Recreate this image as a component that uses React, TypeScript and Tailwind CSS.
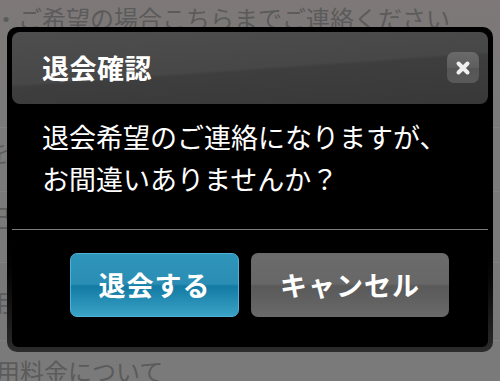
const jp = { fontFamily: '"Noto Sans CJK JP", "Noto Sans", sans-serif' };

function PageBehind() {
  // 後ろのページ（オーバーレイで暗くなっている）
  return (
    <div className="flex flex-col w-[500px] h-[381px] bg-[#7a7a7a] text-[#5b5b5b] overflow-hidden" style={jp}>
      <div className="shrink-0 h-[128px] bg-gradient-to-b from-[#7e7878] to-[#7a7a7a] border-b border-[#828282]">
        <div className="text-[24px] leading-[30px] mt-[3px] -ml-[6px] whitespace-nowrap">
          ・ご希望の場合こちらまでご連絡ください
        </div>
      </div>
      <div className="shrink-0 h-[64px] border-b border-[#828282] flex items-center">
        <span className="text-[24px] -ml-[14px] -mt-[16px]">を</span>
      </div>
      <div className="shrink-0 h-[71px] border-b border-[#828282] flex items-center">
        <span className="text-[24px] -ml-[14px] -mt-[20px]">記</span>
      </div>
      <div className="shrink-0 h-[78px] border-b border-[#828282] flex items-center bg-[#787878]">
        <span className="text-[24px] -ml-[12px]">用</span>
      </div>
      <div className="shrink-0 pt-[15px]">
        <div className="text-[24px] leading-[30px] -ml-[28px] whitespace-nowrap">利用料金について</div>
      </div>
    </div>
  );
}

export default function App() {
  return (
    <div className="relative w-[500px] h-[381px] overflow-hidden">
      <PageBehind />

      <div
        className="absolute left-[7px] top-[27px] w-[486px] h-[325px] rounded-[10px] p-[5px] bg-gradient-to-b from-black from-60% to-[#2c2c2c]"
        style={jp}
      >
        <div className="flex flex-col h-full bg-black rounded-[6px]">
          {/* header */}
          <div className="relative h-[72px] rounded-[8px] bg-[linear-gradient(176deg,#4e4e4e_0%,#474747_50%,#3e3e3e_53%,#383838_100%)] flex items-center pl-[30px]">
            <span className="text-white font-bold text-[27px] leading-none tracking-[0.5px] -mt-[2px]">退会確認</span>
            <button className="absolute right-[9px] top-[20px] w-[32px] h-[31px] rounded-[7px] bg-[linear-gradient(#6a6a6a,#5e5e5e_50%,#555555_52%,#5a5a5a)] flex items-center justify-center">
              <svg width="16" height="16" viewBox="0 0 16 16">
                <path d="M3.5 3.5 L12.5 12.5 M12.5 3.5 L3.5 12.5" stroke="#f0f0f0" strokeWidth="4" strokeLinecap="round" />
              </svg>
            </button>
          </div>

          {/* message */}
          <div className="pl-[30px] pt-[12px] pb-[29px] text-white text-[27px] leading-[42px]">
            <p>退会希望のご連絡になりますが、</p>
            <p>お間違いありませんか？</p>
          </div>

          <div className="h-px bg-[#7c7c7c]" />

          {/* buttons */}
          <div className="flex gap-[12px] pl-[58px] pt-[23px]">
            <button className="w-[169px] h-[64px] rounded-[7px] border border-[#4fb2d6] bg-[linear-gradient(#2f95bb_0%,#2a8db4_48%,#137aa3_52%,#3aa2c6_100%)] text-white font-bold text-[27px] tracking-[1px]">
              退会する
            </button>
            <button className="w-[198px] h-[64px] rounded-[7px] bg-[linear-gradient(#6b6b6b_0%,#676767_48%,#595959_52%,#6a6a6a_100%)] text-white font-bold text-[27px] tracking-[1px]">
              キャンセル
            </button>
          </div>
        </div>
      </div>
    </div>
  );
}
